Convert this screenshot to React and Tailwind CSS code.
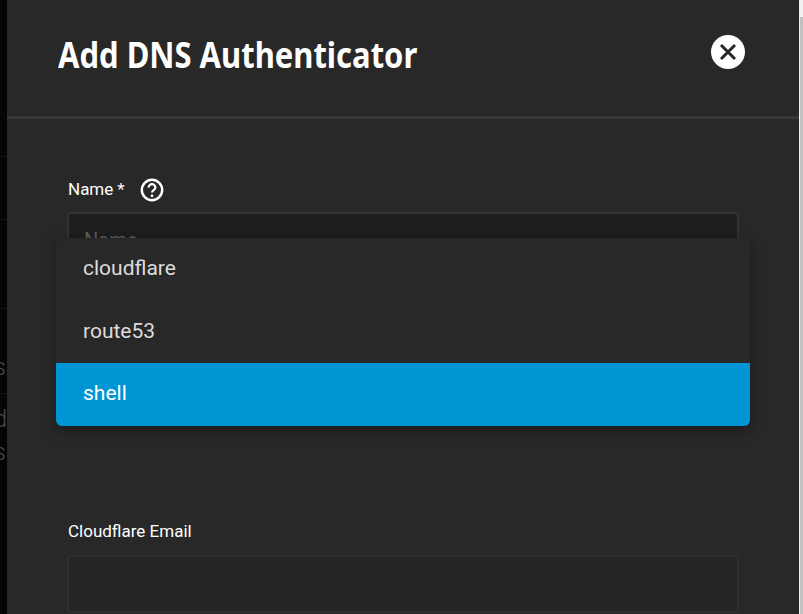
export default function App() {
  const roboto = { fontFamily: 'Roboto, sans-serif' };
  return (
    <div className="flex h-[614px] w-[803px] overflow-hidden bg-[#282828]" style={roboto}>
      <div className="flex w-[7px] shrink-0 flex-col overflow-hidden bg-[#050505] text-[24px] font-light leading-[24px] text-[#4a4a4a]">
        <div className="h-[157px] shrink-0 border-b border-[#101010]" />
        <div className="h-[63px] shrink-0 border-b border-[#101010]" />
        <div className="h-[89px] shrink-0 border-b border-[#101010]" />
        <div className="flex h-[85px] shrink-0 justify-end border-b border-[#101010] pt-[46px] pr-[1px]"><span>s</span></div>
        <div className="mt-[13px] flex h-[24px] shrink-0 justify-end"><span>d</span></div>
        <div className="mt-[9px] flex h-[24px] shrink-0 justify-end pr-[1px]"><span>s</span></div>
      </div>
      <div className="relative flex w-[792px] shrink-0 flex-col bg-[#282828]">
        <header className="flex h-[119px] shrink-0 items-start justify-between border-b-[3px] border-[#383838] pl-[51px] pr-[54px]">
          <h1 className="mt-[32px] origin-left scale-x-[0.885] whitespace-nowrap text-[35px] font-bold leading-[46px] text-white" style={{ fontFamily: '"Noto Sans", sans-serif' }}>Add DNS Authenticator</h1>
          <button className="mt-[35px] flex h-[34px] w-[34px] items-center justify-center rounded-full bg-white">
            <svg width="20" height="20" viewBox="0 0 20 20" fill="none" stroke="#282828" strokeWidth="3">
              <path d="M3 3 17 17M17 3 3 17" />
            </svg>
          </button>
        </header>
        <div className="flex flex-col pl-[60px] pr-[60px]">
          <div className="mt-[59px] flex h-[24px] items-center pl-[1px] text-[17px] text-white">
            <span>Name</span><span className="ml-[4px]">*</span>
            <svg className="ml-[15px]" width="24" height="24" viewBox="0 0 24 24" fill="none" stroke="#fff">
              <circle cx="12" cy="12" r="10.2" strokeWidth="2.4" />
              <path d="M8.6 9.6a3.4 3.4 0 0 1 6.8 0c0 2.4-3.4 2.6-3.4 5" strokeWidth="2.3" />
              <circle cx="12" cy="17.8" r="1.4" fill="#fff" stroke="none" />
            </svg>
          </div>
          <div className="mt-[10px] h-[58px] rounded-[3px] border-2 border-[#333] bg-[#1e1e1e] px-[15px] py-[11px] text-[20px] text-[#5c5c5c]">Name</div>
          <div className="mt-[249px] h-[24px] pl-[1px] text-[17px] leading-[24px] text-white">Cloudflare Email</div>
          <div className="mt-[12px] h-[58px] rounded-[3px] border-2 border-[#2e2e2e] bg-[#252525]" />
        </div>
        <div className="absolute left-[49px] top-[238px] w-[694px] overflow-hidden rounded-[6px] bg-[#282828] text-[21px] text-[#dcdcdc] shadow-[0_4px_14px_rgba(0,0,0,0.35)]">
          <div className="flex h-[62px] items-center pl-[27px]">cloudflare</div>
          <div className="flex h-[63px] items-center pl-[27px]">route53</div>
          <div className="flex h-[63px] items-center bg-[#0095d5] pb-[2px] pl-[27px] text-white">shell</div>
        </div>
      </div>
      <div className="flex w-[4px] shrink-0 flex-col bg-[#f1f1f1]">
        <div className="ml-[1px] mt-[17px] flex-1 bg-[#c1c1c1]" />
      </div>
    </div>
  );
}
